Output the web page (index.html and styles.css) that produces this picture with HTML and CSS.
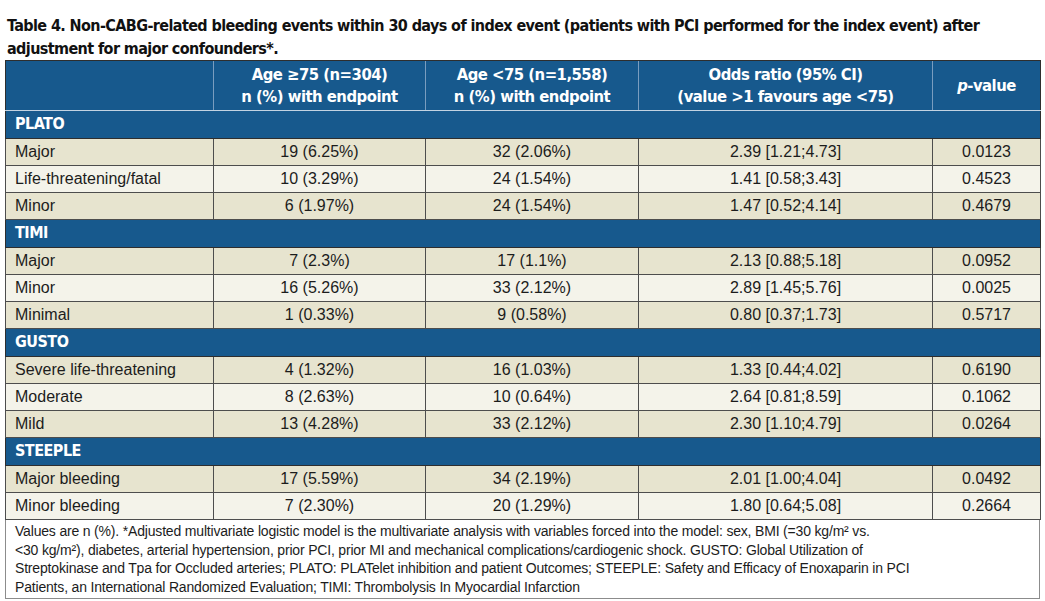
FILE: index.html
```html
<!DOCTYPE html>
<html lang="en">
<head>
<meta charset="utf-8">
<title>Table 4</title>
<link rel="stylesheet" href="styles.css">
</head>
<body>
<div class="page">
  <h1 class="caption">Table 4. Non-CABG-related bleeding events within 30 days of index event (patients with PCI performed for the index event) after adjustment for major confounders*.</h1>
  <table class="data">
    <colgroup>
      <col class="c1"><col class="c2"><col class="c3"><col class="c4"><col class="c5">
    </colgroup>
    <thead>
      <tr class="head">
        <th></th>
        <th>Age ≥75 (n=304)<br>n (%) with endpoint</th>
        <th>Age &lt;75 (n=1,558)<br>n (%) with endpoint</th>
        <th>Odds ratio (95% CI)<br>(value &gt;1 favours age &lt;75)</th>
        <th><i>p</i>-value</th>
      </tr>
    </thead>
    <tbody>
      <tr class="section"><td colspan="5">PLATO</td></tr>
      <tr class="odd"><td>Major</td><td>19 (6.25%)</td><td>32 (2.06%)</td><td>2.39 [1.21;4.73]</td><td>0.0123</td></tr>
      <tr class="even"><td>Life-threatening/fatal</td><td>10 (3.29%)</td><td>24 (1.54%)</td><td>1.41 [0.58;3.43]</td><td>0.4523</td></tr>
      <tr class="odd"><td>Minor</td><td>6 (1.97%)</td><td>24 (1.54%)</td><td>1.47 [0.52;4.14]</td><td>0.4679</td></tr>
      <tr class="section"><td colspan="5">TIMI</td></tr>
      <tr class="odd"><td>Major</td><td>7 (2.3%)</td><td>17 (1.1%)</td><td>2.13 [0.88;5.18]</td><td>0.0952</td></tr>
      <tr class="even"><td>Minor</td><td>16 (5.26%)</td><td>33 (2.12%)</td><td>2.89 [1.45;5.76]</td><td>0.0025</td></tr>
      <tr class="odd"><td>Minimal</td><td>1 (0.33%)</td><td>9 (0.58%)</td><td>0.80 [0.37;1.73]</td><td>0.5717</td></tr>
      <tr class="section"><td colspan="5">GUSTO</td></tr>
      <tr class="odd"><td>Severe life-threatening</td><td>4 (1.32%)</td><td>16 (1.03%)</td><td>1.33 [0.44;4.02]</td><td>0.6190</td></tr>
      <tr class="even"><td>Moderate</td><td>8 (2.63%)</td><td>10 (0.64%)</td><td>2.64 [0.81;8.59]</td><td>0.1062</td></tr>
      <tr class="odd"><td>Mild</td><td>13 (4.28%)</td><td>33 (2.12%)</td><td>2.30 [1.10;4.79]</td><td>0.0264</td></tr>
      <tr class="section"><td colspan="5">STEEPLE</td></tr>
      <tr class="odd"><td>Major bleeding</td><td>17 (5.59%)</td><td>34 (2.19%)</td><td>2.01 [1.00;4.04]</td><td>0.0492</td></tr>
      <tr class="even"><td>Minor bleeding</td><td>7 (2.30%)</td><td>20 (1.29%)</td><td>1.80 [0.64;5.08]</td><td>0.2664</td></tr>
    </tbody>
  </table>
  <div class="notes">
    <p class="notes-text">Values are n (%). *Adjusted multivariate logistic model is the multivariate analysis with variables forced into the model: sex, BMI (=30 kg/m² vs.<br>&lt;30 kg/m²), diabetes, arterial hypertension, prior PCI, prior MI and mechanical complications/cardiogenic shock. GUSTO: Global Utilization of<br>Streptokinase and Tpa for Occluded arteries; PLATO: PLATelet inhibition and patient Outcomes; STEEPLE: Safety and Efficacy of Enoxaparin in PCI<br>Patients, an International Randomized Evaluation; TIMI: Thrombolysis In Myocardial Infarction</p>
  </div>
</div>
</body>
</html>
```

FILE: styles.css
```css
html, body {
  margin: 0;
  padding: 0;
  background: #ffffff;
}

.page {
  padding: 14px 0 0 5px;
  font-family: "Liberation Sans", Arial, sans-serif;
  color: #1a1a1a;
}

.caption {
  margin: 0;
  padding: 0 0 0 2px;
  font-family: "DejaVu Sans Condensed", "Liberation Sans", sans-serif;
  font-weight: bold;
  font-size: 16px;
  letter-spacing: -0.6px;
  line-height: 23px;
  color: #111111;
  width: 1010px;
}

.data {
  margin-top: 0;
  width: 1035px;
  border-collapse: collapse;
  table-layout: fixed;
  border: 1px solid #2e2e2e;
}

.c1 { width: 208px; }
.c2 { width: 212px; }
.c3 { width: 213px; }
.c4 { width: 294px; }
.c5 { width: 108px; }

.head th {
  background: #17598d;
  color: #ffffff;
  font-family: "DejaVu Sans Condensed", "Liberation Sans", sans-serif;
  font-weight: bold;
  font-size: 16.5px;
  letter-spacing: -0.5px;
  line-height: 22px;
  height: 49px;
  padding: 0 4px;
  text-align: center;
  vertical-align: middle;
  border-left: 1px solid #7a9dbf;
  border-bottom: 1px solid #c3d3e2;
  border-top: 1px solid #2e2e2e;
}

.head th:first-child {
  border-left: 1px solid #2e2e2e;
}

.section td {
  background: #17598d;
  color: #ffffff;
  font-family: "DejaVu Sans Condensed", "Liberation Sans", sans-serif;
  font-weight: bold;
  font-size: 16px;
  letter-spacing: -0.5px;
  line-height: 20px;
  height: 25px;
  padding: 0 0 2px 9px;
  vertical-align: middle;
  border: 1px solid #2e2e2e;
  border-top: none;
}

tbody tr:not(.section) td {
  font-size: 16px;
  line-height: 18px;
  height: 25px;
  padding: 0 4px 1px;
  text-align: center;
  vertical-align: middle;
  border: 1px solid #4d4d4d;
  color: #1c1c1c;
}

tbody tr:not(.section) td:first-child {
  text-align: left;
  padding-left: 9px;
}

.odd td { background: #e7e4cf; }
.even td { background: #f4f3ea; }

.notes {
  width: 1033px;
  border: 1px solid #8c8c8c;
  border-top: none;
  background: #ffffff;
}

.notes-text {
  margin: 0;
  padding: 2px 0 1px 9px;
  font-size: 14px;
  letter-spacing: -0.18px;
  line-height: 18.7px;
  color: #1c1c1c;
  white-space: nowrap;
}
```
